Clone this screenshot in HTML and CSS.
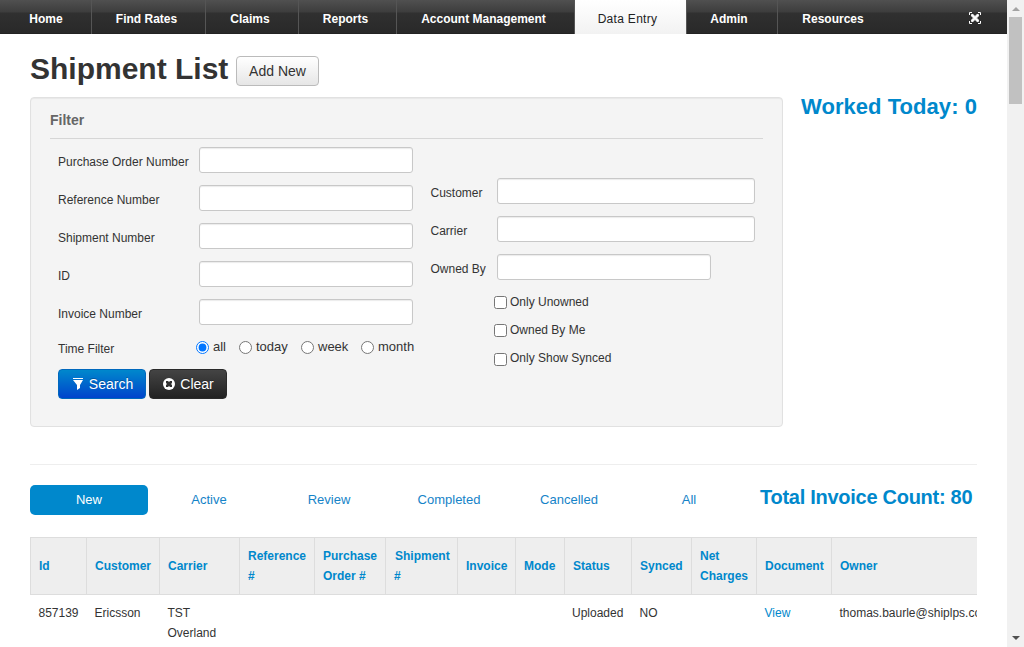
FILE: index.html
```
<!DOCTYPE html>
<html lang="en">
<head>
<meta charset="utf-8">
<title>Shipment List</title>
<link rel="stylesheet" href="styles.css">
</head>
<body>
<div class="page">
  <nav class="nav">
    <a class="nav-item home">Home</a>
    <a class="nav-item rates">Find Rates</a>
    <a class="nav-item claims">Claims</a>
    <a class="nav-item reports">Reports</a>
    <a class="nav-item account">Account Management</a>
    <a class="nav-item active">Data Entry</a>
    <a class="nav-item admin">Admin</a>
    <a class="nav-item resources">Resources</a>
    <svg class="expand" width="12" height="12" viewBox="0 0 12 12"><path d="M.5 3V.5H3M9 .5h2.500V3M.5 9v2.500H3M9 11.500h2.500V9" fill="none" stroke="#fff"/><path d="M2 2h3v1h2V2h3v3H9v2h1v3H7V9H5v1H2V7h1V5H2z" fill="#fff" opacity=".45"/><path d="M2.500 2.500l7 7M9.500 2.500l-7 7" stroke="#fff" stroke-width="2"/></svg>
  </nav>
  <main class="content">
    <header class="heading"><h1>Shipment List</h1><button class="btn light">Add New</button></header>
    <div class="top">
      <section class="filter">
        <h2>Filter</h2>
        <div class="columns">
          <div class="left">
            <label class="field"><span>Purchase Order Number</span><input type="text"></label>
            <label class="field"><span>Reference Number</span><input type="text"></label>
            <label class="field"><span>Shipment Number</span><input type="text"></label>
            <label class="field"><span>ID</span><input type="text"></label>
            <label class="field"><span>Invoice Number</span><input type="text"></label>
            <div class="time"><span class="time-label">Time Filter</span>
              <label class="all"><input type="radio" name="t" checked>all</label>
              <label class="today"><input type="radio" name="t">today</label>
              <label class="week"><input type="radio" name="t">week</label>
              <label><input type="radio" name="t">month</label>
            </div>
            <div class="buttons">
              <button class="btn blue"><svg width="12" height="12" viewBox="0 0 12 12"><path d="M1 0h10v1H1zM1 2h10L8 7v3l-3 2V7z" fill="#fff"/></svg>Search</button>
              <button class="btn dark"><svg width="12" height="12" viewBox="0 0 12 12"><circle cx="6" cy="6" r="6" fill="#fff"/><path d="M3 3h2l1 1 1-1h2v2L8 6l1 1v2H7L6 8 5 9H3V7l1-1-1-1z" fill="#303030"/></svg>Clear</button>
            </div>
          </div>
          <div class="right">
            <label class="field"><span>Customer</span><input type="text"></label>
            <label class="field"><span>Carrier</span><input type="text"></label>
            <label class="field"><span>Owned By</span><input class="short" type="text"></label>
            <div class="checks">
              <label><input type="checkbox">Only Unowned</label>
              <label><input type="checkbox">Owned By Me</label>
              <label class="synced"><input type="checkbox">Only Show Synced</label>
            </div>
          </div>
        </div>
      </section>
      <div class="worked">Worked Today: 0</div>
    </div>
    <hr>
    <div class="tabs">
      <a class="tab current">New</a><a class="tab">Active</a><a class="tab">Review</a><a class="tab">Completed</a><a class="tab">Cancelled</a><a class="tab">All</a>
      <strong class="total">Total Invoice Count: 80</strong>
    </div>
    <div class="table-wrap">
      <table>
        <colgroup><col class="w56"><col class="w73"><col class="w80"><col class="w75"><col class="w71"><col class="w72"><col class="w58"><col class="w49"><col class="w67"><col class="w60"><col class="w65"><col class="w75"><col class="w190"></colgroup>
        <thead><tr><th>Id</th><th>Customer</th><th>Carrier</th><th>Reference #</th><th>Purchase Order #</th><th class="ship">Shipment #</th><th>Invoice</th><th>Mode</th><th>Status</th><th>Synced</th><th>Net Charges</th><th>Document</th><th>Owner</th></tr></thead>
        <tbody><tr><td>857139</td><td>Ericsson</td><td>TST Overland</td><td></td><td></td><td></td><td></td><td></td><td class="status">Uploaded</td><td>NO</td><td></td><td><a>View</a></td><td>thomas.baurle@shiplps.com</td></tr></tbody>
      </table>
    </div>
  </main>
</div>
<div class="scrollbar"><i class="arrow up"></i><div class="thumb"></div><i class="arrow down"></i></div>
</body>
</html>
```
FILE: styles.css
```
* { box-sizing: border-box; }
body { margin: 0; width: 1024px; height: 647px; display: flex; overflow: hidden; background: #fff; color: #333; font: 12px/20px "Liberation Sans", Arial, sans-serif; }
.page { width: 1007px; height: 647px; overflow: hidden; }
.nav { display: flex; height: 34px; align-items: stretch; background: linear-gradient(#505050 0, #3d3d3d 12px, #303030 13px, #292929 33px, #1e1e1e 34px); }
.nav-item { padding-top: 9px; text-align: center; color: #fff; font-weight: bold; border-right: 1px solid #555; }
.home { width: 92px; padding-left: 1px; }
.rates { width: 114px; padding-right: 4px; }
.claims { width: 93px; padding-right: 4px; }
.reports { width: 98px; padding-right: 4px; }
.account { width: 178px; padding-right: 4px; }
.active { width: 112px; padding-right: 6px; color: #222; font-weight: normal; background: linear-gradient(#fff, #f2f2f2); letter-spacing: 0.3px; }
.admin { width: 91px; padding-right: 6px; }
.resources { width: 110px; border: 0; }
.expand { margin: 12px 0 0 81px; }
.content { padding: 19px 30px 0; }
.heading { display: flex; gap: 8px; height: 44px; }
h1 { margin: 0; width: 198px; font-size: 30px; line-height: 32px; white-space: nowrap; }
.btn { display: flex; align-items: center; justify-content: center; height: 30px; padding: 0; gap: 5px; font: 14px/20px "Liberation Sans", Arial, sans-serif; border-radius: 4px; color: #fff; }
.light { width: 83px; margin-top: 3px; color: #333; border: 1px solid #bbb; background: linear-gradient(#fff, #e6e6e6); }
.top { display: flex; gap: 18px; }
.filter { width: 753px; height: 330px; padding: 12px 19px 0; border: 1px solid #e1e1e1; border-radius: 4px; background: #f4f4f4; box-shadow: inset 0 1px 1px rgba(0,0,0,.05); }
h2 { margin: 0 0 8px; height: 29px; border-bottom: 1px solid #d6d6d6; font-size: 14px; line-height: 20px; color: #666; }
.columns { display: flex; padding-left: 8px; }
.left { width: 372.500px; }
.right { padding-top: 31px; }
.field { display: flex; height: 38px; }
.field span { width: 141px; padding-top: 5px; white-space: nowrap; }
.right .field span { width: 66.500px; }
.field input { width: 214px; height: 26px; margin: 0; border: 1px solid #c8c8c8; border-radius: 3px; background: #fff; box-shadow: inset 0 1px 1px rgba(0,0,0,.08); }
.right .field input { width: 258px; }
.right .field .short { width: 214px; }
.time { display: flex; height: 32px; font-size: 13px; white-space: nowrap; }
.time-label { width: 138px; padding-top: 2px; font-size: 12px; }
.time label { display: flex; }
.time input { width: 13px; height: 13px; margin: 4px 4px 0 0; }
.time .all { width: 43px; }
.time .today { width: 62px; }
.time .week { width: 60px; }
.buttons { display: flex; gap: 3px; }
.buttons .btn { padding-left: 1px; text-shadow: 0 -1px 0 rgba(0,0,0,.25); }
.blue { width: 88px; border: 1px solid #0068bd; background: linear-gradient(#0088cc, #0044cc); }
.dark { width: 78px; border: 1px solid #2a2a2a; background: linear-gradient(#444, #222); }
.checks { padding-left: 63.500px; }
.checks label { display: flex; height: 28px; white-space: nowrap; }
.checks input { width: 13px; height: 13px; margin: 4px 3px 0 0; }
.checks .synced input { margin-top: 5px; }
.worked { color: #0088cc; font-size: 22px; font-weight: bold; line-height: 20px; letter-spacing: 0.05px; white-space: nowrap; }
hr { margin: 37px 0 20px; border: 0; border-top: 1px solid #eee; }
.tabs { display: flex; height: 30px; color: #0088cc; font-size: 13px; }
.tab { width: 118px; flex: none; height: 30px; margin-right: 2px; padding-top: 5px; text-align: center; color: #1583c8; }
.current { border-radius: 5px; background: #0088cc; color: #fff; }
.total { margin-left: 10px; font-size: 20px; letter-spacing: -0.270px; line-height: 24px; white-space: nowrap; }
.table-wrap { width: 947px; margin-top: 22px; overflow: hidden; }
table { width: 991px; table-layout: fixed; border-collapse: separate; border-spacing: 0; }
th, td { text-align: left; padding: 8px 0 8px 8px; border-left: 1px solid #ddd; }
th { height: 58px; border-top: 1px solid #ddd; border-bottom: 1px solid #ddd; background: #eee; color: #0088cc; }
.ship { text-indent: 1px; }
td { vertical-align: top; border-left-color: transparent; padding-left: 7.500px; }
.status { padding-left: 7px; }
td a { color: #0088cc; }
.w56 { width: 56px; } .w73 { width: 73px; } .w80 { width: 80px; } .w75 { width: 75px; } .w71 { width: 71px; } .w72 { width: 72px; } .w58 { width: 58px; } .w49 { width: 49px; } .w67 { width: 67px; } .w60 { width: 60px; } .w65 { width: 65px; } .w190 { width: 190px; }
.scrollbar { width: 17px; height: 647px; display: flex; flex-direction: column; align-items: center; background: #f1f1f1; }
.arrow { width: 0; height: 0; border: 4px solid transparent; }
.up { margin-top: 7px; border-top: 0; border-bottom-color: #a3a3a3; }
.thumb { width: 13px; height: 87px; margin-top: 6px; background: #c1c1c1; }
.down { margin-top: auto; margin-bottom: 7px; border-bottom: 0; border-top-color: #505050; }
```
